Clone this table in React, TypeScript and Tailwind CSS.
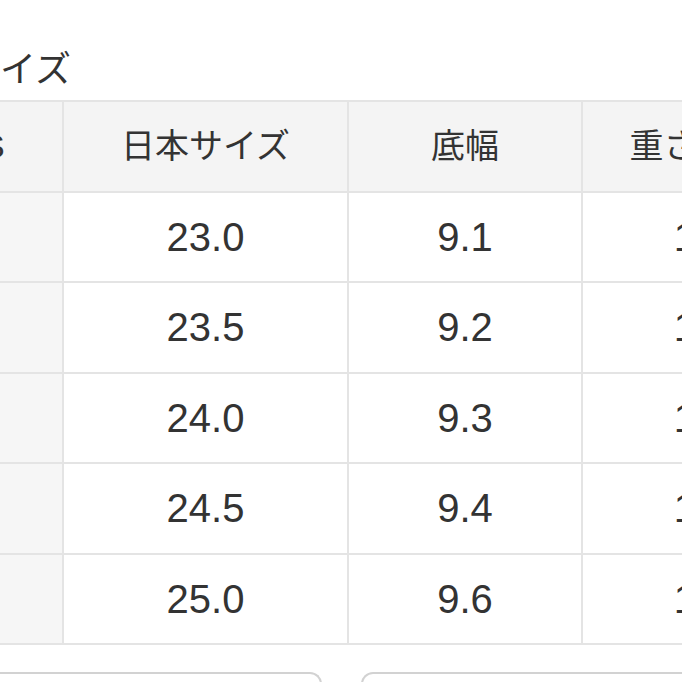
const headers = ['US', '日本サイズ', '底幅', '重さ（g）'];

const rows = [
  { us: '', jp: '23.0', width: '9.1', weight: '170' },
  { us: '', jp: '23.5', width: '9.2', weight: '175' },
  { us: '', jp: '24.0', width: '9.3', weight: '180' },
  { us: '', jp: '24.5', width: '9.4', weight: '185' },
  { us: '', jp: '25.0', width: '9.6', weight: '190' },
];

const cell = 'flex h-[90.5px] items-center justify-center border-b-2 border-r-2 border-[#e4e4e4]';

export default function App() {
  return (
    <div
      className="h-[682px] w-[682px] overflow-hidden bg-white text-[#333]"
      style={{ fontFamily: '"Liberation Sans", "Noto Sans CJK JP", sans-serif' }}
    >
      <div className="ml-[-100px] w-[900px] pt-[50px]">
        <h1 className="pl-[64px] text-[36px] leading-[40px] font-normal">サイズ</h1>

        <div className="mt-[10px] grid grid-cols-[164px_285px_234px_250px] border-t-2 border-[#e4e4e4]">
          {headers.map((h) => (
            <div key={h} className={`${cell} bg-[#f4f4f4] text-[34px]`}>
              {h}
            </div>
          ))}
          {rows.map((r) => (
            <div key={r.jp} className="contents">
              <div className={`${cell} bg-[#f6f6f6] text-[40px]`}>{r.us}</div>
              <div className={`${cell} text-[40px]`}>{r.jp}</div>
              <div className={`${cell} text-[40px]`}>{r.width}</div>
              <div className={`${cell} text-[40px]`}>{r.weight}</div>
            </div>
          ))}
        </div>

        <div className="mt-[27px] flex gap-[39px]">
          <div className="h-[40px] w-[422px] rounded-t-[12px] border-x-2 border-t-2 border-[#d2d2d2]" />
          <div className="h-[40px] w-[400px] rounded-t-[12px] border-x-2 border-t-2 border-[#d2d2d2]" />
        </div>
      </div>
    </div>
  );
}
